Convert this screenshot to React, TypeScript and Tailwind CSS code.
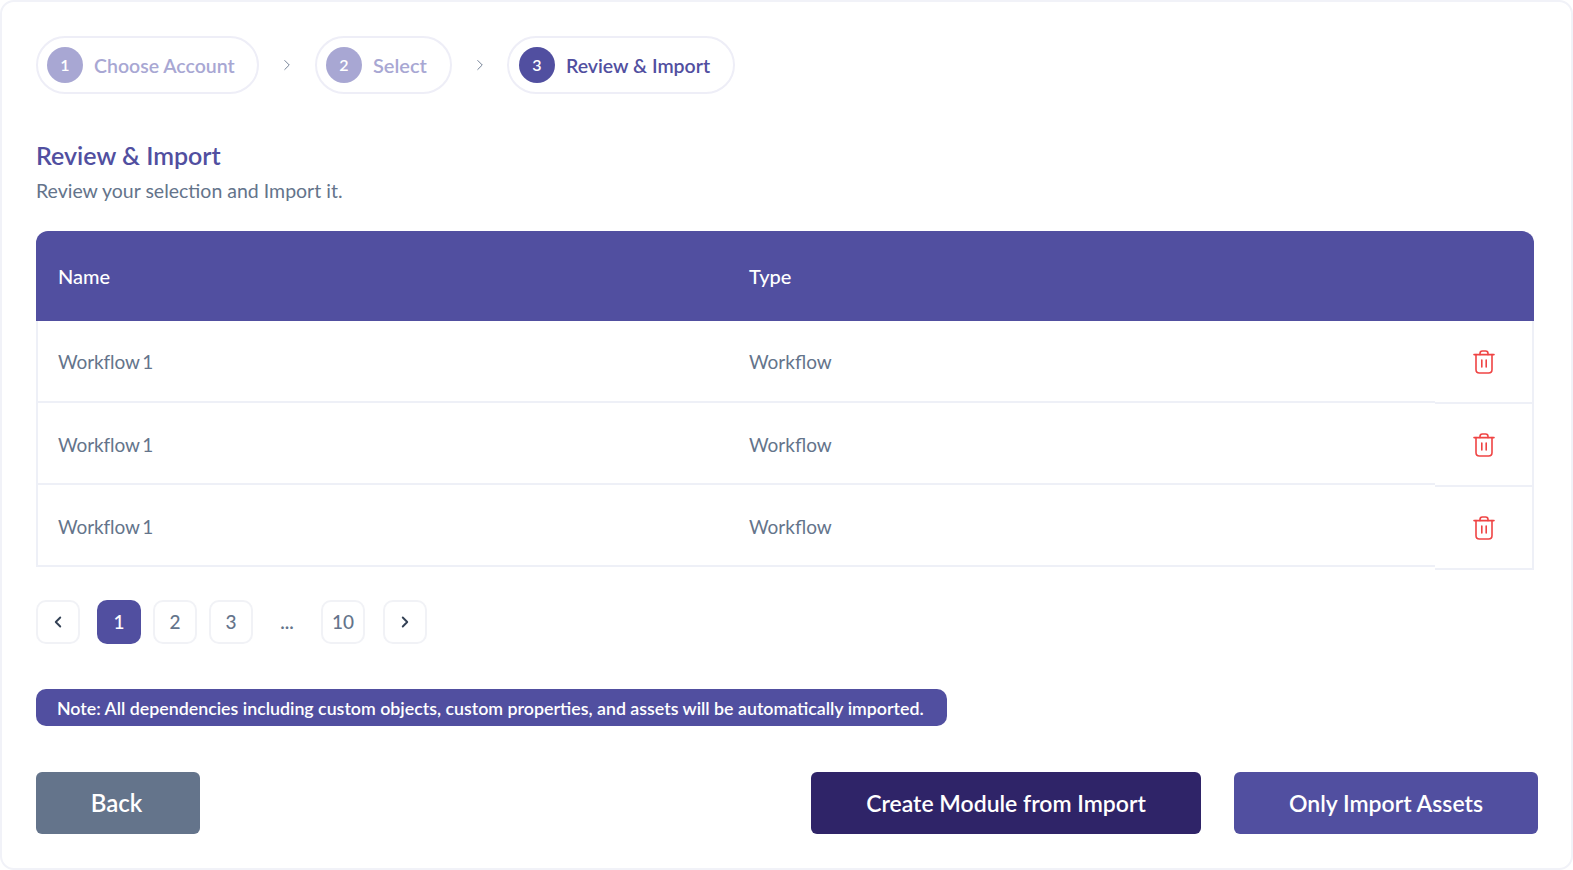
import { ChevronLeft, ChevronRight } from "lucide-react";

const font = "font-['Lato','Noto_Sans',sans-serif]";

function TrashIcon() {
    return (
        <svg width="22" height="24" viewBox="0 0 22 24" fill="none" stroke="#EF4444" strokeWidth="1.6" strokeLinecap="round" strokeLinejoin="round">
            <path d="M1 4.6H21" />
            <path d="M3 4.6V19.5C3 21.6 4.4 23 6.4 23H15.6C17.6 23 19 21.6 19 19.5V4.6" />
            <path d="M7 4.6V3.4C7 2 8 1 9.4 1H12.6C14 1 15 2 15 3.4V4.6" />
            <path d="M8.8 10V17" />
            <path d="M13.2 10V17" />
        </svg>
    );
}

function Step({ n, label, active, width, labelClass = "", padClass = "pl-[9px]" }: { n: number; label: string; active?: boolean; width: string; labelClass?: string; padClass?: string }) {
    return (
        <div className={`flex h-[58px] items-center gap-[11px] rounded-full border-2 border-[#EEEEF7] ${padClass} ${width}`}>
            <span className={`flex h-[36px] w-[36px] items-center justify-center rounded-full text-[16px] font-semibold text-white ${active ? "bg-[#514FA0]" : "bg-[#A8A7D3]"}`}>{n}</span>
            <span className={`font-semibold ${active ? "text-[#514FA0]" : "text-[#A8A7D3]"} ${labelClass}`}>{label}</span>
        </div>
    );
}

function PageButton({ children, active, className = "" }: { children: React.ReactNode; active?: boolean; className?: string }) {
    return (
        <button className={`flex h-[44px] w-[44px] items-center justify-center rounded-[10px] text-[19px] font-medium ${active ? "bg-[#514FA0] text-white" : "border-2 border-[#F1F2F6] text-[#64748B]"} ${className}`}>
            {children}
        </button>
    );
}

export default function App() {
    const rows = [1, 2, 3];

    return (
        <div className={`${font} h-[870px] w-full bg-white`}>
            <div className="flex h-[870px] w-full flex-col rounded-[14px] border-2 border-[#F1F2F8] px-[34px] pt-[34px]">
                <div className="flex items-center">
                    <Step n={1} label="Choose Account" width="w-[223px]" labelClass="pt-[2px] text-[19.5px]" />
                    <ChevronRight size={18} strokeWidth={1.2} className="ml-[19px] mr-[19px] text-[#64748B]" />
                    <Step n={2} label="Select" width="w-[137px]" labelClass="text-[20px]" />
                    <ChevronRight size={18} strokeWidth={1.2} className="ml-[19px] mr-[18px] text-[#64748B]" />
                    <Step n={3} label="Review & Import" active width="w-[228px]" labelClass="pt-[2px] text-[19.5px]" padClass="pl-[10px]" />
                </div>

                <h2 className="mt-[43px] text-[25px] leading-[36px] font-semibold text-[#514FA0]">Review &amp; Import</h2>
                <p className="mt-[4px] text-[19.5px] leading-[28px] text-[#64748B]">Review your selection and Import it.</p>

                <div className="mt-[26px] w-[1498px]">
                    <div className="flex h-[90px] items-center rounded-t-[12px] bg-[#514FA0] text-[20px] font-medium text-white">
                        <span className="w-[713px] pl-[22px]">Name</span>
                        <span>Type</span>
                    </div>
                    <div className="flex">
                        <div className="flex-1">
                            {rows.map((r) => (
                                <div key={r} className="flex h-[82px] items-center border-b-2 border-l-2 border-[#EEF0F7] pt-[5px] text-[19px] text-[#64748B] first:pt-[3px]">
                                    <span className="w-[711px] pl-[20px] tracking-[-0.1px] [word-spacing:-2px]">Workflow 1</span>
                                    <span>Workflow</span>
                                </div>
                            ))}
                        </div>
                        <div className="w-[99px]">
                            {rows.map((r) => (
                                <div key={r} className="flex h-[83px] items-center border-r-2 border-b-2 border-[#EEF0F7] pl-[38px]">
                                    <TrashIcon />
                                </div>
                            ))}
                        </div>
                    </div>
                </div>

                <div className="mt-[30px] flex items-center">
                    <PageButton><ChevronLeft size={18} strokeWidth={2.5} className="text-[#334155]" /></PageButton>
                    <PageButton active className="ml-[17px]">1</PageButton>
                    <PageButton className="ml-[12px]">2</PageButton>
                    <PageButton className="ml-[12px]">3</PageButton>
                    <span className="flex w-[68px] justify-center text-[19px] font-semibold text-[#64748B]">...</span>
                    <PageButton>10</PageButton>
                    <PageButton className="ml-[18px]"><ChevronRight size={18} strokeWidth={2.5} className="text-[#334155]" /></PageButton>
                </div>

                <div className="mt-[45px] flex h-[37px] w-[911px] items-center rounded-[10px] bg-[#514FA0] pl-[21px] pt-[1px] text-[17.8px] font-semibold text-white">
                    Note: All dependencies including custom objects, custom properties, and assets will be automatically imported.
                </div>

                <div className="mt-[46px] flex w-[1502px]">
                    <button className="h-[62px] w-[164px] rounded-[6px] bg-[#64748B] pr-[3px] text-[24px] font-semibold text-white">Back</button>
                    <button className="ml-auto h-[62px] w-[390px] rounded-[6px] bg-[#2F2468] text-[23px] font-semibold text-white">Create Module from Import</button>
                    <button className="ml-[33px] h-[62px] w-[304px] rounded-[6px] bg-[#514FA0] text-[23px] font-semibold text-white">Only Import Assets</button>
                </div>
            </div>
        </div>
    );
}
